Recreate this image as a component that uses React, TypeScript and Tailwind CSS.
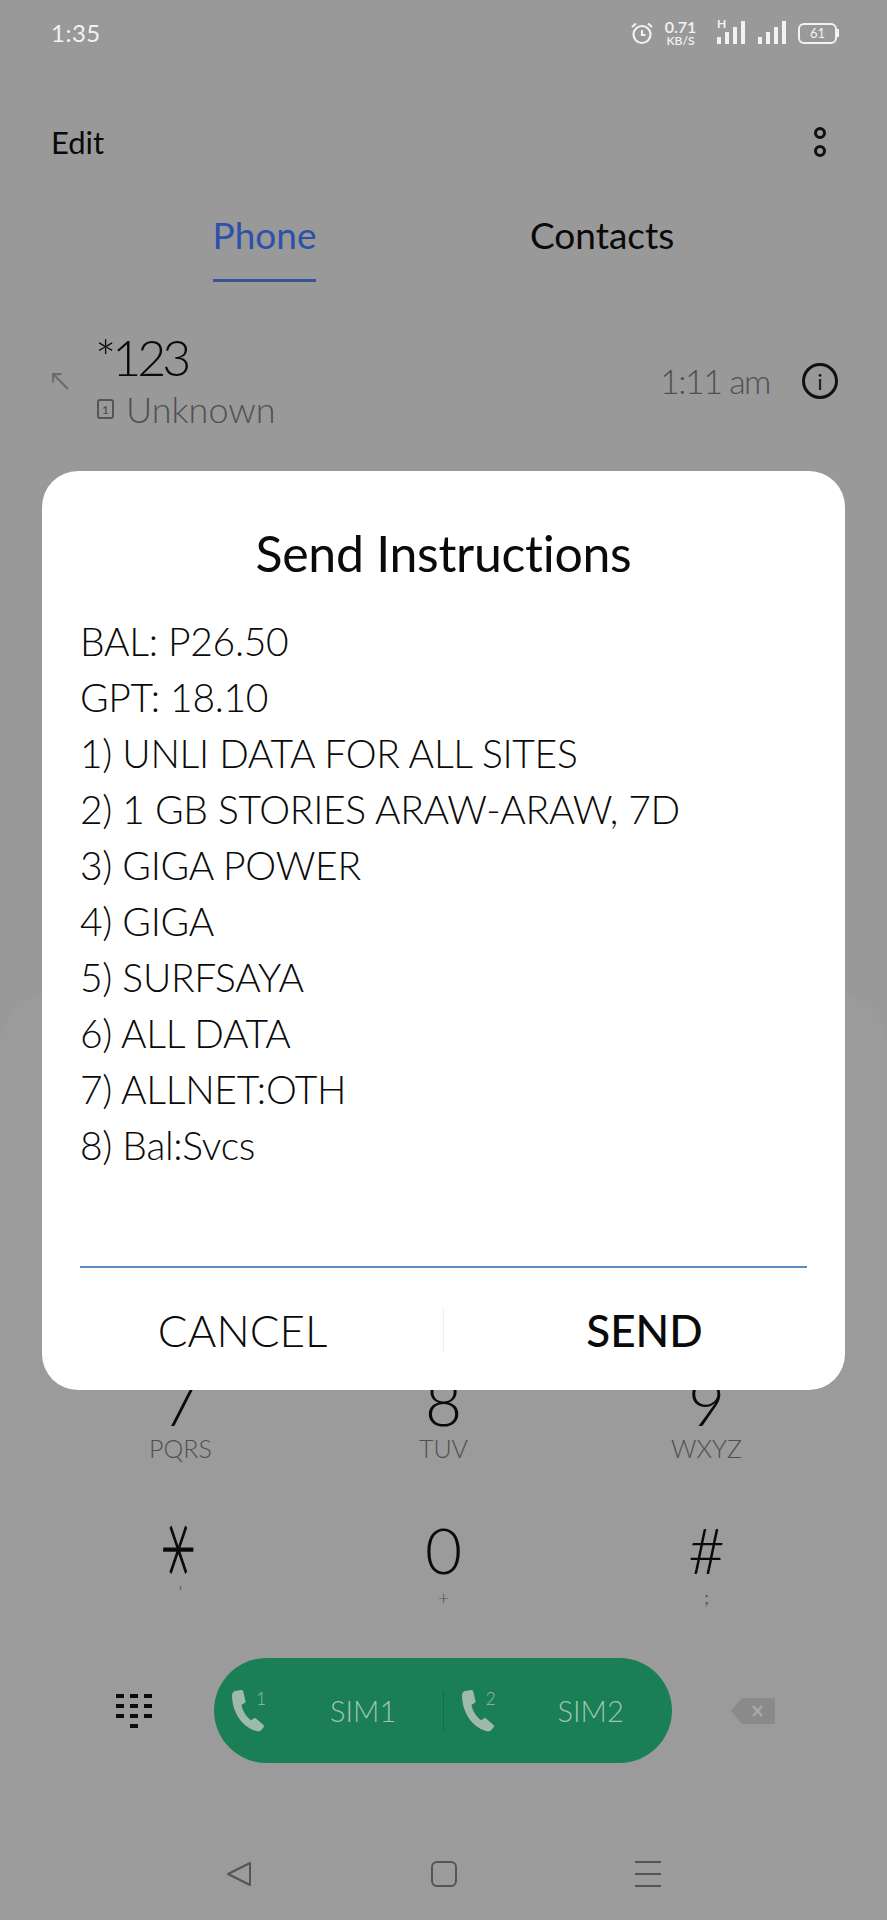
const font = "font-['Lato','Liberation_Sans',sans-serif]";

function Bars({ className }: { className?: string }) {
  return (
    <svg viewBox="0 0 28 24" className={className} fill="#f2f2f2">
      <rect x="0" y="16" width="4" height="7" />
      <rect x="8" y="11" width="4" height="12" />
      <rect x="16" y="6" width="4" height="17" />
      <rect x="24" y="0" width="4" height="23" />
    </svg>
  );
}

function StatusBar() {
  return (
    <div className="flex h-[66px] items-center justify-between pl-[51px] pr-[48px] text-[#f2f2f2]">
      <span className="text-[24px] leading-none tracking-[0.5px]">1:35</span>
      <div className="flex items-center">
        <svg viewBox="0 0 24 24" className="h-[24px] w-[24px]" fill="none" stroke="#f2f2f2" strokeWidth="2.2">
          <circle cx="12" cy="13.5" r="8.5" />
          <path d="M12 9v5h3.5M2 6l4-3.5M22 6l-4-3.5" />
        </svg>
        <div className="ml-[11px] flex w-[31px] flex-col items-center leading-none">
          <span className="text-[16px] font-semibold leading-[16px]">0.71</span>
          <span className="text-[12px] font-semibold leading-[12px]">KB/S</span>
        </div>
        <div className="relative ml-[21px] h-[24px] w-[28px]">
          <span className="absolute left-0 top-[-3px] text-[12px] font-bold leading-none">H</span>
          <Bars className="h-[24px] w-[28px]" />
        </div>
        <Bars className="ml-[13px] h-[24px] w-[28px]" />
        <div className="ml-[12px] flex items-center">
          <div className="flex h-[21px] w-[39px] items-center justify-center rounded-[6px] border-2 border-[#f2f2f2] text-[13px] leading-none">61</div>
          <div className="h-[8px] w-[2px] bg-[#f2f2f2]" />
        </div>
      </div>
    </div>
  );
}

function SimIcon({ n }: { n: number }) {
  return (
    <div className="relative h-[42px] w-[33px]">
      <svg viewBox="0 0 33 42" className="h-[42px] w-[33px]" fill="#9fb9ab">
        <path d="M3 1 9 0c1.200-.2 2 .4 2.300 1.500l2.200 9.500c.2 1-.2 1.800-1.200 2.300l-2.800 1.500c.6 5 4.500 12 9.500 15.500l2.800-1.800c.9-.6 1.800-.5 2.500.2l7 6c.9.8.9 1.900.1 2.800l-2.300 2.700c-1.200 1.300-3.300 1.500-5.200.7C10 37 0 22 0 5c0-1.700 1.500-3.600 3-4z" />
      </svg>
      <span className="absolute right-[-1px] top-[0px] text-[17px] leading-none text-[#9fb9ab]">{n}</span>
    </div>
  );
}

function Key({ digit, sub, subClass }: { digit: React.ReactNode; sub: string; subClass: string }) {
  return (
    <div className="flex h-[148px] flex-col items-center">
      <div className="flex h-[62px] items-center text-[64px] font-light leading-[62px] text-[#0a0a0a]">{digit}</div>
      <div className={subClass}>{sub}</div>
    </div>
  );
}

const lines = [
  "BAL: P26.50",
  "GPT: 18.10",
  "1) UNLI DATA FOR ALL SITES",
  "2) 1 GB STORIES ARAW-ARAW, 7D",
  "3) GIGA POWER",
  "4) GIGA",
  "5) SURFSAYA",
  "6) ALL DATA",
  "7) ALLNET:OTH",
  "8) Bal:Svcs",
];

export default function App() {
  return (
    <div className={`relative flex h-[1920px] w-[887px] flex-col overflow-hidden bg-[#999999] ${font}`}>
      <StatusBar />

      <div className="mt-[56px] flex h-[40px] items-center justify-between pl-[51px] pr-[61px]">
        <span className="text-[31px] leading-none text-[#0a0a0a]">Edit</span>
        <div className="flex flex-col gap-[6px]">
          <div className="h-[12px] w-[12px] rounded-full border-[3px] border-[#111]" />
          <div className="h-[12px] w-[12px] rounded-full border-[3px] border-[#111]" />
        </div>
      </div>

      <div className="mt-[53px] flex h-[67px] items-start pl-[213px]">
        <div className="flex h-[67px] w-[103px] flex-col items-center border-b-[3px] border-[#3a5597]">
          <span className="text-[37px] leading-[40px] text-[#2c51a8]">Phone</span>
        </div>
        <span className="ml-[214px] text-[37px] leading-[40px] text-[#0a0a0a]">Contacts</span>
      </div>

      <div className="mt-[48px] flex items-center pl-[52px] pr-[49px]">
        <svg viewBox="0 0 16 16" className="h-[17px] w-[17px]" fill="none" stroke="#6c6c6c" strokeWidth="2">
          <path d="M1 9V1h8M1.500 1.500 15 15" />
        </svg>
        <div className="ml-[28px] flex flex-col">
          <span className="ml-[-2px] text-[50px] font-light leading-[54px] tracking-[-4px] text-[#0a0a0a]">*123</span>
          <div className="mt-[2px] flex items-center">
            <div className="flex h-[20px] w-[17px] items-center justify-center rounded-[3px] border-2 border-[#555] text-[11px] font-bold leading-none text-[#555]">1</div>
            <span className="ml-[12px] text-[36px] font-light leading-[46px] text-[#505050]">Unknown</span>
          </div>
        </div>
        <span className="ml-auto text-[34px] font-light leading-none tracking-[-1.5px] text-[#505050]">1:11 am</span>
        <div className="ml-[32px] flex h-[36px] w-[36px] items-center justify-center rounded-full border-[3px] border-[#111] text-[21px] leading-none text-[#111]">i</div>
      </div>

      {/* dialer panel, barely lighter than the page */}
      <div className="mt-[560px] flex-1 rounded-t-[56px] bg-[#9b9b9b] pt-[379px]">
        <div className="grid grid-cols-3 px-[49px]">
          <Key digit="7" sub="PQRS" subClass="text-[25px] font-light leading-[30px] text-[#505050]" />
          <Key digit="8" sub="TUV" subClass="text-[25px] font-light leading-[30px] text-[#505050]" />
          <Key digit="9" sub="WXYZ" subClass="text-[25px] font-light leading-[30px] text-[#505050]" />
          <Key
            digit={<span className="font-['DejaVu_Sans',sans-serif] rotate-90 scale-x-[1.7] text-[64px] font-extralight [-webkit-text-stroke:1px_#0a0a0a]">∗</span>}
            sub="'"
            subClass="text-[15px] leading-[20px] text-[#555]"
          />
          <Key digit="0" sub="+" subClass="mt-[4px] text-[20px] font-light leading-[24px] text-[#555]" />
          <Key digit="#" sub=";" subClass="mt-[4px] text-[18px] leading-[24px] text-[#555]" />
        </div>

        <div className="mt-[-9px] flex items-center pl-[116px]">
          <svg viewBox="0 0 36 36" className="h-[36px] w-[36px]" fill="#0c0c0c">
            <rect x="0" y="1" width="8" height="4" /><rect x="14" y="1" width="8" height="4" /><rect x="28" y="1" width="8" height="4" />
            <rect x="0" y="11" width="8" height="4" /><rect x="14" y="11" width="8" height="4" /><rect x="28" y="11" width="8" height="4" />
            <rect x="0" y="21" width="8" height="4" /><rect x="14" y="21" width="8" height="4" /><rect x="28" y="21" width="8" height="4" />
            <rect x="14" y="31" width="8" height="4" />
          </svg>
          <div className="ml-[62px] flex h-[105px] w-[458px] items-center rounded-full bg-[#1a7f55] text-[29px] font-light text-[#9fc4b1]">
            <div className="flex flex-1 items-center pl-[18px]">
              <SimIcon n={1} />
              <span className="ml-[65px] leading-none">SIM1</span>
            </div>
            <div className="h-[40px] w-px bg-[#17694a]" />
            <div className="flex flex-1 items-center pl-[18px]">
              <SimIcon n={2} />
              <span className="ml-[63px] leading-none">SIM2</span>
            </div>
          </div>
          <svg viewBox="0 0 44 26" className="ml-[59px] h-[26px] w-[44px]" fill="#8a8a8a">
            <path d="M11 0h31a2 2 0 0 1 2 2v22a2 2 0 0 1-2 2H11L0 13z" />
            <path d="m22 8 9 10m0-10-9 10" stroke="#a8a8a8" strokeWidth="2.500" />
          </svg>
        </div>

        <div className="mt-[98px] flex items-center pl-[226px]">
          <svg viewBox="0 0 26 26" className="h-[26px] w-[26px]" fill="none" stroke="#555" strokeWidth="2" strokeLinejoin="round">
            <path d="M24 2v22L2 13z" />
          </svg>
          <div className="ml-[179px] h-[26px] w-[26px] rounded-[6px] border-2 border-[#555]" />
          <div className="ml-[178px] flex h-[26px] w-[26px] flex-col justify-between">
            <div className="h-[2px] bg-[#555]" />
            <div className="h-[2px] bg-[#555]" />
            <div className="h-[2px] bg-[#555]" />
          </div>
        </div>
      </div>

      {/* dialog sits over the dialer */}
      <div className="absolute left-[42px] top-[471px] flex h-[919px] w-[803px] flex-col rounded-[36px] bg-white">
        <h2 className="mt-[57px] text-center text-[50px] font-normal leading-[50px] tracking-[-0.3px] text-[#0a0a0a]">Send Instructions</h2>
        <div className="mt-[35px] px-[38px] text-[39px] font-light leading-[56px] tracking-[-0.3px] text-[#0a0a0a]">
          {lines.map((l) => (
            <div key={l}>{l}</div>
          ))}
        </div>
        <div className="mx-[38px] mt-[93px] h-[2px] bg-[#5b8cc0]" />
        <div className="mt-[37px] flex items-center">
          <button className="flex-1 text-center text-[44px] font-light leading-[50px] text-[#0a0a0a]">CANCEL</button>
          <div className="h-[44px] w-px bg-[#eeeeee]" />
          <button className="flex-1 text-center text-[44px] font-medium leading-[50px] text-[#0a0a0a]">SEND</button>
        </div>
      </div>
    </div>
  );
}
